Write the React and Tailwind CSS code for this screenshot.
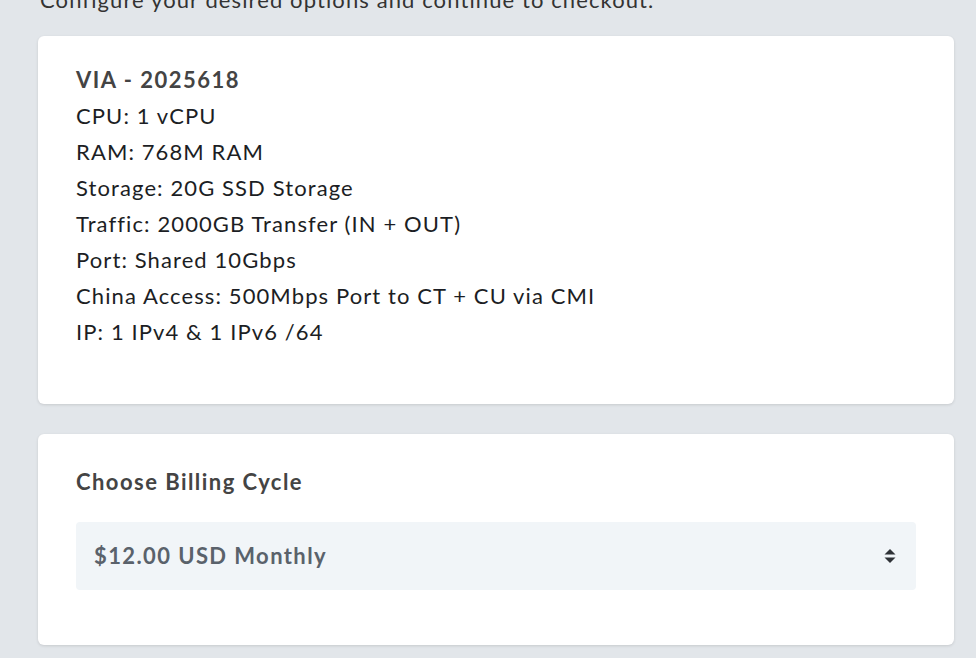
export default function App() {
  const specs = [
    'CPU: 1 vCPU',
    'RAM: 768M RAM',
    'Storage: 20G SSD Storage',
    'Traffic: 2000GB Transfer (IN + OUT)',
    'Port: Shared 10Gbps',
    'China Access: 500Mbps Port to CT + CU via CMI',
    'IP: 1 IPv4 & 1 IPv6 /64',
  ];

  return (
    <div
      className="min-h-screen bg-[#e2e6ea] overflow-hidden text-[22px] leading-[36px] tracking-[1.1px]"
      style={{ fontFamily: 'Lato, "Noto Sans", sans-serif' }}
    >
      <div className="-mt-[18px] pl-[38px] pr-[22px]">
        <p className="text-[#333] pl-[2px]">
          Configure your desired options and continue to checkout.
        </p>

        <div className="mt-[18px] bg-white rounded-md shadow-[0_1px_3px_rgba(0,0,0,0.12)] px-[38px] pt-[26px] pb-[54px] text-[#1c1e24]">
          <div className="font-bold text-[#444] tracking-[1.5px]">VIA - 2025618</div>
          {specs.map((s) => (
            <div key={s}>{s}</div>
          ))}
        </div>

        <div className="mt-[30px] bg-white rounded-md shadow-[0_1px_3px_rgba(0,0,0,0.12)] px-[38px] pt-[30px] pb-[55px]">
          <div className="font-bold text-[#444] tracking-[1.45px]">Choose Billing Cycle</div>
          <div className="mt-[22px] h-[68px] rounded bg-[#f1f5f8] flex items-center justify-between pl-[18px] pr-[18px]">
            <span className="font-bold text-[#5a626b] tracking-[1.4px]">$12.00 USD Monthly</span>
            <svg width="14" height="16" viewBox="0 0 14 16" className="mr-[1px]">
              <path d="M7 1 L12.5 6.5 L1.5 6.5 Z" fill="#2f3237" />
              <path d="M7 15 L12.5 9.5 L1.5 9.5 Z" fill="#2f3237" />
            </svg>
          </div>
        </div>
      </div>
    </div>
  );
}
